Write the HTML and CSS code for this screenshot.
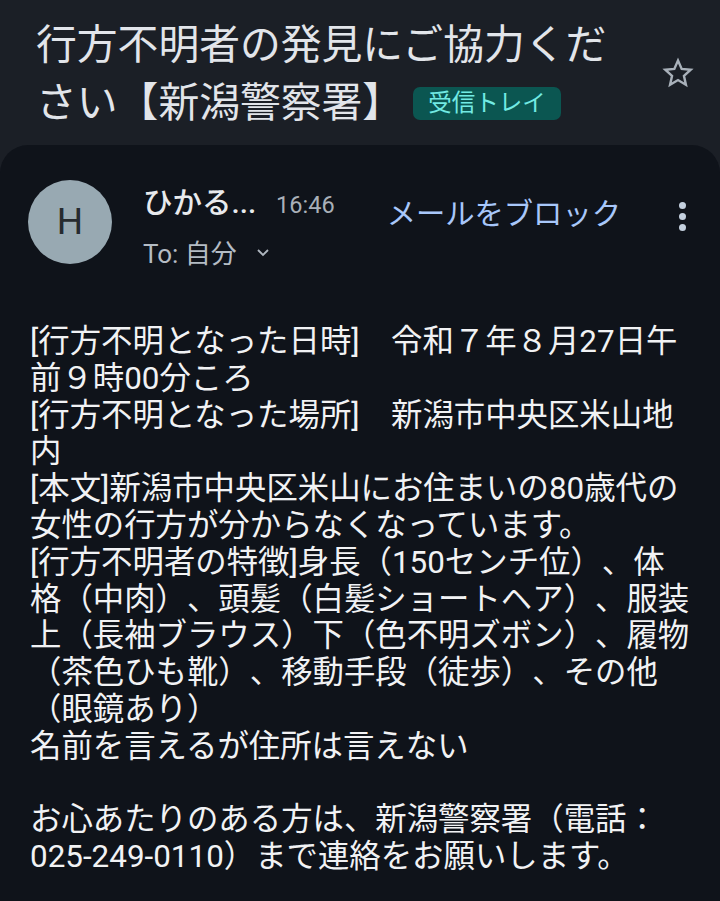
FILE: index.html
```html
<!DOCTYPE html>
<html lang="ja">
<head>
<meta charset="utf-8">
<link rel="stylesheet" href="styles.css">
</head>
<body>
<div class="screen">
  <header class="subject">
    <h1 class="title">行方不明者の発見にご協力ください【新潟警察署】<span class="badge">受信トレイ</span></h1>
    <div class="star">
      <svg width="34" height="34" viewBox="0 0 24 24"><path d="M12 3.2l2.6 5.9 6.4.6-4.8 4.3 1.4 6.3L12 17l-5.6 3.3 1.4-6.3L3 9.7l6.4-.6z" fill="none" stroke="#a9b1ba" stroke-width="1.7" stroke-linejoin="miter"/></svg>
    </div>
  </header>
  <main class="card">
    <div class="sender">
      <div class="avatar">H</div>
      <div class="info">
        <div class="nameline"><span class="name">ひかる...</span><span class="time">16:46</span></div>
        <div class="toline">To: 自分<svg class="chev" width="14" height="9" viewBox="0 0 14 9"><path d="M2 2l5 5 5-5" fill="none" stroke="#aeb6bf" stroke-width="1.8"/></svg></div>
      </div>
      <div class="block">メールをブロック</div>
      <div class="kebab"><i></i><i></i><i></i></div>
    </div>
    <div class="body">[行方不明となった日時]　令和７年８月27日午前９時00分ころ<br>[行方不明となった場所]　新潟市中央区米山地内<br>[本文]新潟市中央区米山にお住まいの80歳代の女性の行方が分からなくなっています。<br>[行方不明者の特徴]身長（150センチ位）、体格（中肉）、頭髪（白髪ショートヘア）、服装上（長袖ブラウス）下（色不明ズボン）、履物（茶色ひも靴）、移動手段（徒歩）、その他（眼鏡あり）<br>名前を言えるが住所は言えない<br><br>お心あたりのある方は、新潟警察署（電話：025-249-0110）まで連絡をお願いします。</div>
  </main>
</div>
</body>
</html>
```
FILE: styles.css
```css
html, body {
  margin: 0;
  padding: 0;
  background: #1b1f26;
}
.screen {
  width: 720px;
  height: 901px;
  overflow: hidden;
  background: #1b1f26;
  font-family: Roboto, "Noto Sans CJK JP", sans-serif;
  color: #e6e8ec;
  display: flex;
  flex-direction: column;
  text-spacing-trim: space-all;
}
.subject {
  display: flex;
  align-items: flex-start;
  padding: 16px 0 0 36px;
}
.title {
  margin: 0;
  width: 596px;
  font-weight: 400;
  font-size: 40.8px;
  line-height: 58px;
  color: #e2e5ea;
}
.badge {
  display: inline-block;
  vertical-align: 6px;
  margin-left: 10px;
  padding: 0 15px;
  height: 33px;
  line-height: 33px;
  border-radius: 7px;
  background: #0b5651;
  color: #72eae3;
  font-size: 23.5px;
}
.star {
  margin-left: auto;
  margin-right: 25px;
  margin-top: 40px;
  width: 34px;
  height: 34px;
}
.card {
  flex: 1;
  margin-top: 13px;
  background: #0f131a;
  border-radius: 28px 28px 0 0;
}
.sender {
  display: flex;
  align-items: flex-start;
  padding: 35px 26px 0 28px;
}
.avatar {
  width: 84px;
  height: 84px;
  border-radius: 50%;
  background: #98a9b2;
  color: #262b2f;
  font-size: 37px;
  line-height: 84px;
  text-align: center;
  flex: none;
}
.info {
  margin-left: 31px;
  width: 230px;
}
.nameline {
  display: flex;
  align-items: baseline;
  height: 46px;
  line-height: 46px;
}
.name {
  font-size: 29.5px;
  font-weight: 500;
  color: #e8eaed;
}
.time {
  margin-left: 20px;
  font-size: 23.5px;
  color: #a9b0b8;
}
.toline {
  margin-top: 8px;
  font-size: 26px;
  line-height: 40px;
  color: #b4bcc4;
}
.chev {
  margin-left: 19px;
  vertical-align: 6px;
}
.block {
  margin-left: auto;
  margin-top: 14px;
  font-size: 29.3px;
  line-height: 40px;
  color: #a8c7fa;
}
.kebab {
  margin-left: 49px;
  margin-top: 22px;
  width: 24px;
  display: flex;
  flex-direction: column;
  align-items: center;
  gap: 4px;
}
.kebab i {
  display: block;
  width: 7px;
  height: 7px;
  border-radius: 50%;
  background: #c4d0de;
}
.body {
  margin-top: 50px;
  padding-left: 30px;
  width: 662px;
  font-size: 31.4px;
  line-height: 36.8px;
  color: #f1f2f4;
}
```
